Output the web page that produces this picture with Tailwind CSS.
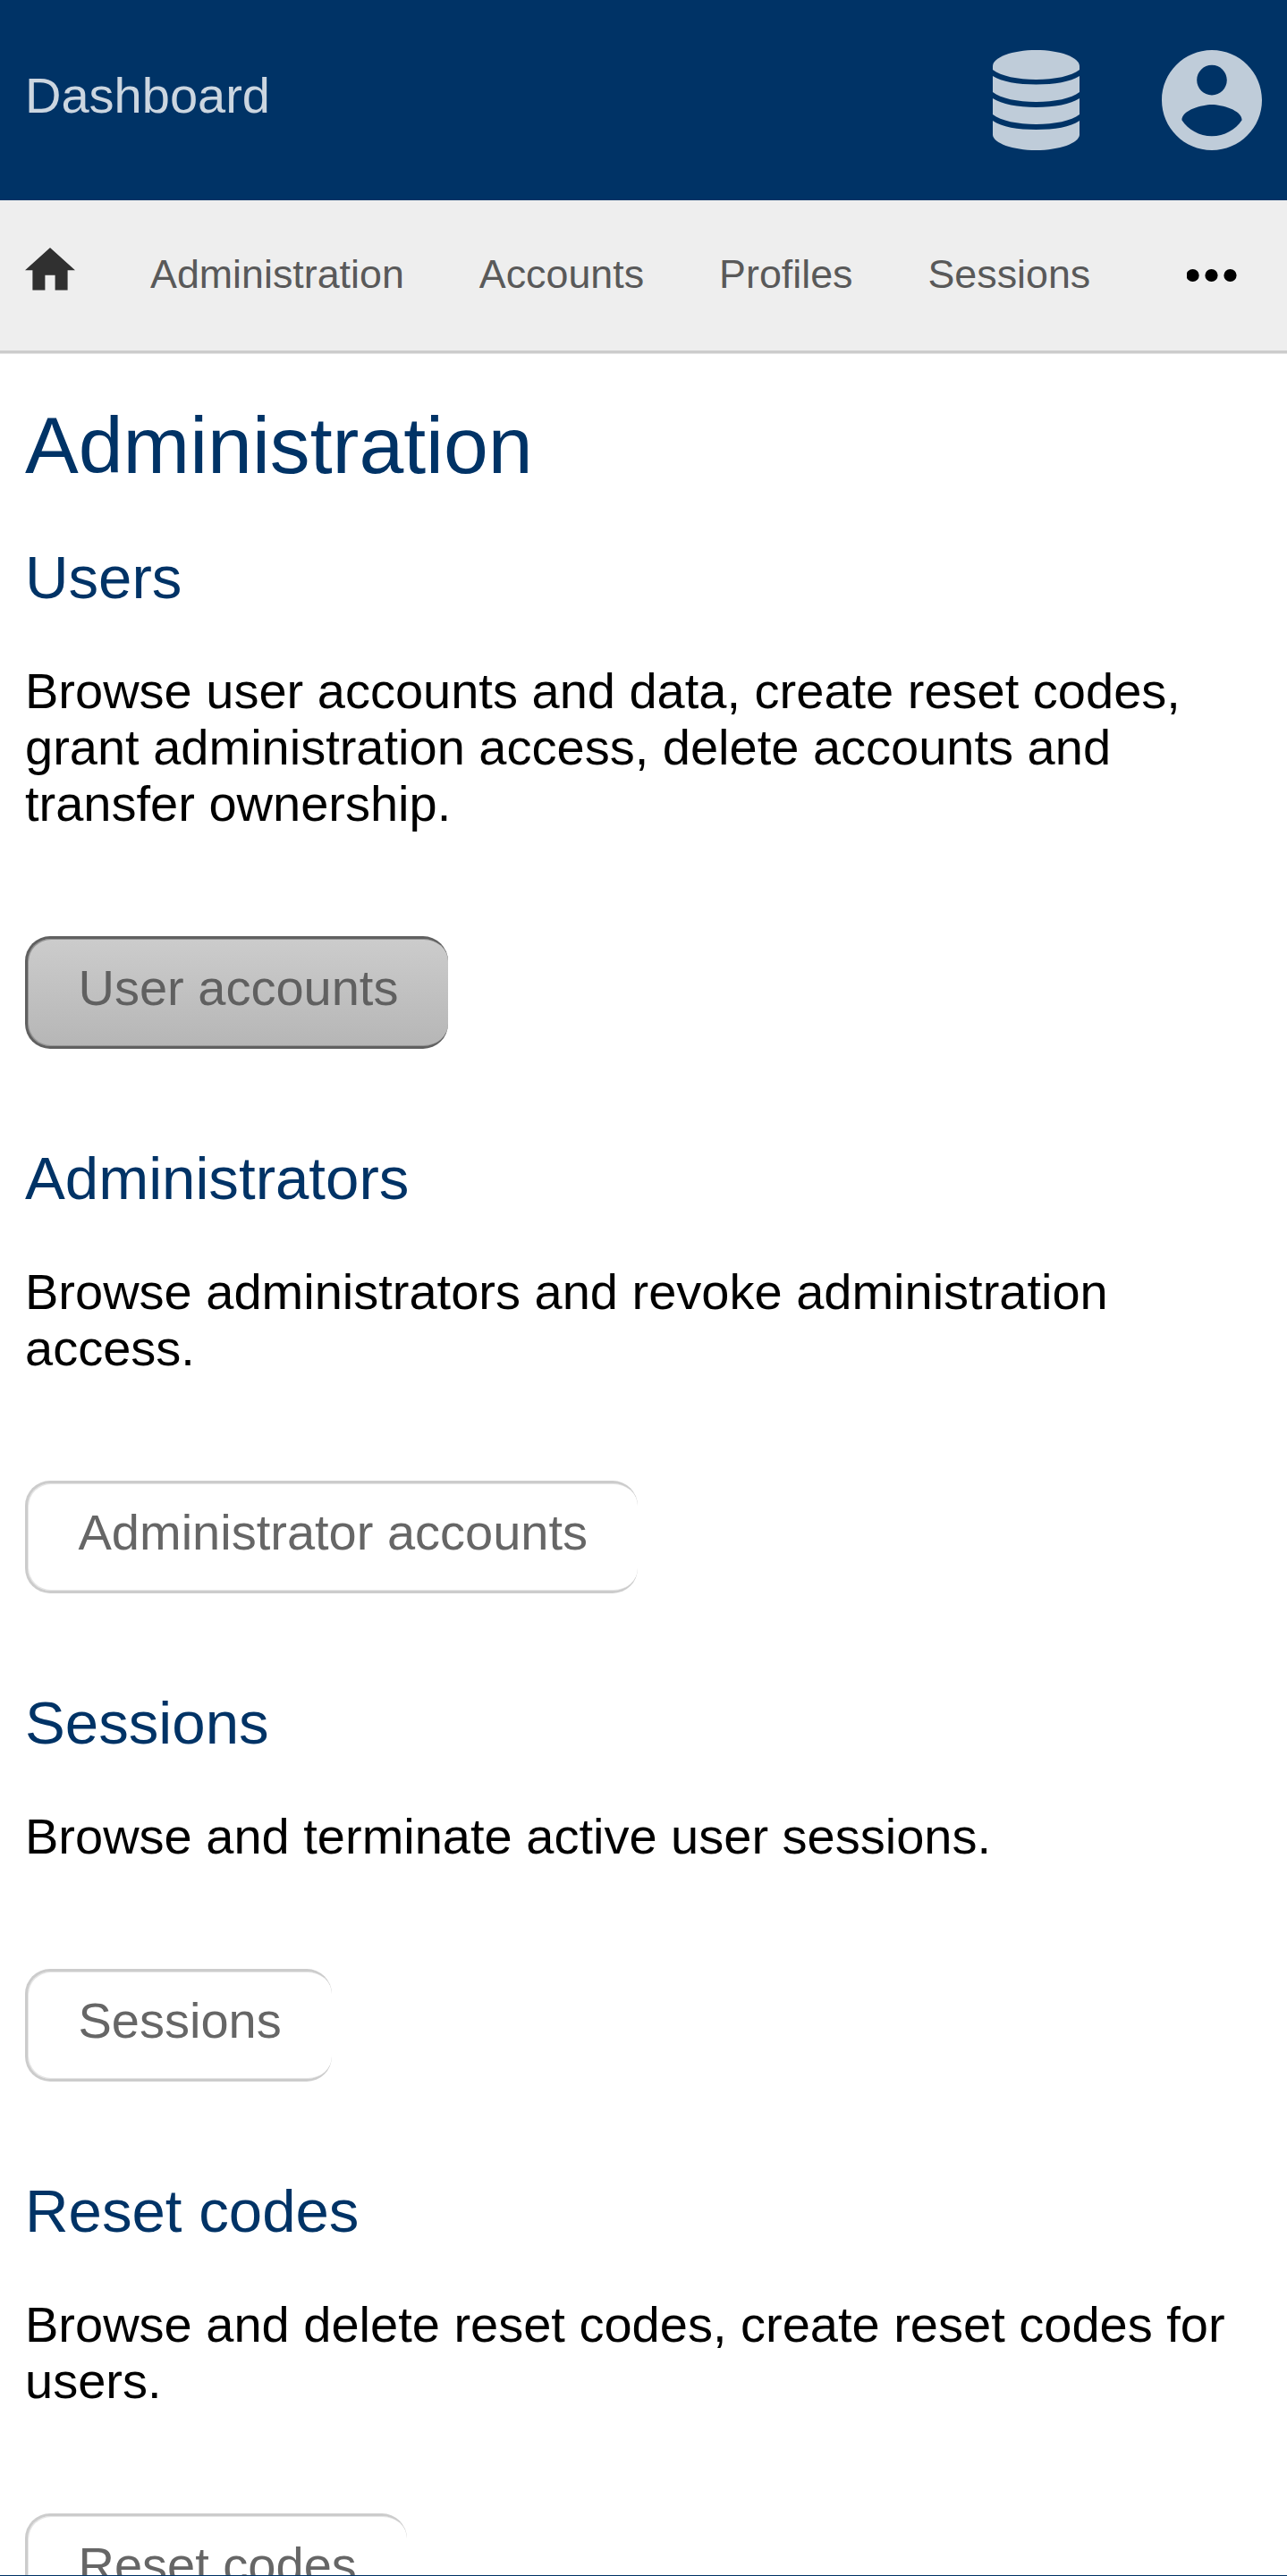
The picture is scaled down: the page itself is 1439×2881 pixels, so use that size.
<!DOCTYPE html>
<html lang="en">
<head>
<meta charset="utf-8">
<title>Administration</title>
<script src="https://cdn.jsdelivr.net/npm/@tailwindcss/browser@4"></script>
</head>
<body class="bg-white text-black font-['Liberation_Sans',Arial,sans-serif] text-[56px] leading-[63px]">
<div class="h-[2881px] overflow-hidden flex flex-col">
  <header class="h-[224px] shrink-0 bg-[#003366] flex items-start justify-between px-7">
    <a class="mt-[75px] text-[#ccd6e0]">Dashboard</a>
    <div class="flex mt-14 gap-[92px] text-[#bfccd9]">
      <svg class="w-[97px] h-28" viewBox="0 0 97 112" fill="currentColor">
        <path d="M0 18C0 8 22 0 48.500 0S97 8 97 18V22C88 29 69 33 48.500 33S9 29 0 22Z"/>
        <path d="M0 29C10 35.500 28 38.500 48.500 38.500S87 35.500 97 29V47C88 54 69 58 48.500 58S9 54 0 47Z"/>
        <path d="M0 54C10 60.500 28 64 48.500 64S87 60.500 97 54V72C88 79 69 83 48.500 83S9 79 0 72Z"/>
        <path d="M0 79C10 86 28 89 48.500 89S87 86 97 79V95C96 104 75 112 48.500 112S1 104 0 95Z"/>
      </svg>
      <svg class="w-28 h-28" viewBox="2 2 20 20" fill="currentColor"><path d="M12 2C6.480 2 2 6.480 2 12s4.480 10 10 10 10-4.480 10-10S17.520 2 12 2zm0 3c1.660 0 3 1.340 3 3s-1.340 3-3 3-3-1.340-3-3 1.340-3 3-3zm0 14.200c-2.500 0-4.710-1.280-6-3.220.03-1.990 4-3.080 6-3.080 1.990 0 5.970 1.090 6 3.080-1.290 1.940-3.500 3.220-6 3.220z"/></svg>
    </div>
  </header>
  <nav class="h-[171px] shrink-0 bg-[#eeeeee] border-b-3 border-[#cccccc] shadow-[0_1px_0_#e6e6e6] flex items-start gap-[84px] pl-7 pr-14 text-[44.8px] leading-[51px] text-[#595959]">
    <svg class="w-14 h-[47.6px] mt-[53.4px]" viewBox="2 3 20 17" fill="#303030"><path d="M10 20v-6h4v6h5v-8h3L12 3 2 12h3v8z"/></svg>
    <a class="mt-[57px]">Administration</a>
    <a class="mt-[57px]">Accounts</a>
    <a class="mt-[57px]">Profiles</a>
    <a class="mt-[57px]">Sessions</a>
    <svg class="w-14 h-4 mt-[76px] ml-auto" viewBox="0 0 56 16" fill="#000"><circle cx="6.600" cy="8" r="7.100"/><circle cx="27.500" cy="8" r="7.100"/><circle cx="48.500" cy="8" r="7.100"/></svg>
  </nav>
  <main class="flex-1 min-h-0 overflow-hidden px-7 pt-[53px]">
    <h1 class="text-[89.6px] leading-[101px] text-[#003366] mb-[59px]">Administration</h1>
    <section class="mb-[107px]">
      <h2 class="text-[67.2px] leading-[76px] text-[#003366] mb-[57px]">Users</h2>
      <p class="mb-[117px]">Browse user accounts and data, create reset codes, grant administration access, delete accounts and transfer ownership.</p>
      <a class="block w-fit h-[126px] pt-[23px] pl-[56.5px] pr-14 border-3 border-r-0 border-[#606060] rounded-[28px] bg-linear-to-b from-[#cccccc] to-[#b6b6b6] text-[#606060] shadow-[inset_1px_1px_0_#969696,inset_1px_-1px_0_#969696]">User accounts</a>
    </section>
    <section class="mb-[107px]">
      <h2 class="text-[67.2px] leading-[76px] text-[#003366] mb-[57px]">Administrators</h2>
      <p class="mb-[117px]">Browse administrators and revoke administration access.</p>
      <a class="block w-fit h-[126px] pt-[23px] pl-[56.5px] pr-14 border-3 border-r-0 border-[#cccccc] rounded-[28px] text-[#666666] shadow-[inset_1px_1px_0_#e6e6e6,inset_1px_-1px_0_#e6e6e6]">Administrator accounts</a>
    </section>
    <section class="mb-[107px]">
      <h2 class="text-[67.2px] leading-[76px] text-[#003366] mb-[57px]">Sessions</h2>
      <p class="mb-[117px]">Browse and terminate active user sessions.</p>
      <a class="block w-fit h-[126px] pt-[23px] pl-[56.5px] pr-14 border-3 border-r-0 border-[#cccccc] rounded-[28px] text-[#666666] shadow-[inset_1px_1px_0_#e6e6e6,inset_1px_-1px_0_#e6e6e6]">Sessions</a>
    </section>
    <section>
      <h2 class="text-[67.2px] leading-[76px] text-[#003366] mb-[57px]">Reset codes</h2>
      <p class="mb-[117px]">Browse and delete reset codes, create reset codes for users.</p>
      <a class="block w-fit h-[126px] pt-[23px] pl-[56.5px] pr-14 border-3 border-r-0 border-[#cccccc] rounded-[28px] text-[#666666] shadow-[inset_1px_1px_0_#e6e6e6,inset_1px_-1px_0_#e6e6e6]">Reset codes</a>
    </section>
  </main>
  <footer class="h-px shrink-0 bg-[#003366]"></footer>
</div>
</body>
</html>
